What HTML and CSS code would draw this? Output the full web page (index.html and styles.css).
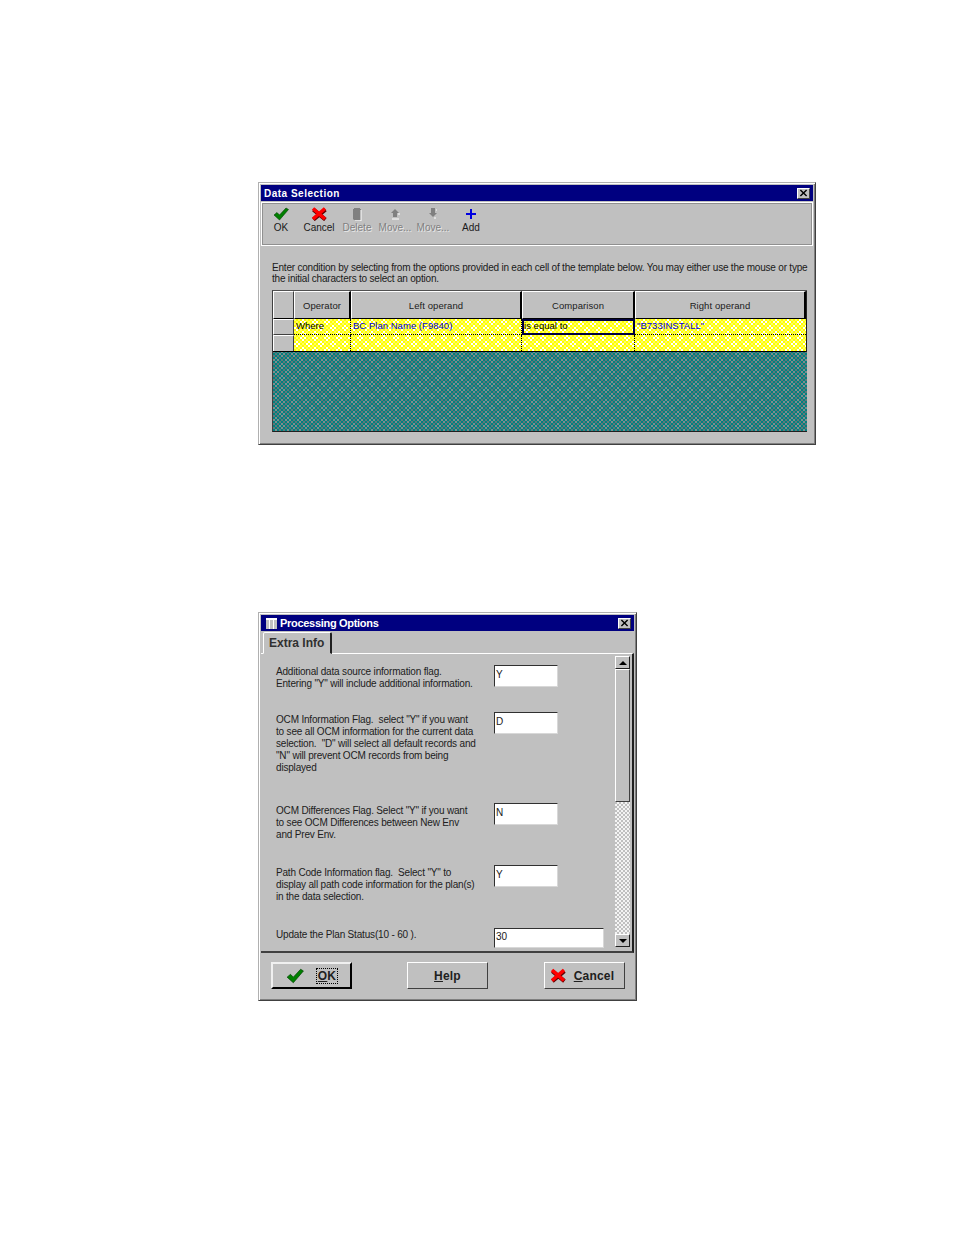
FILE: index.html
```html
<!DOCTYPE html>
<html lang="en">
<head>
<meta charset="utf-8">
<title>Data Selection and Processing Options</title>
<link rel="stylesheet" href="styles.css">
</head>
<body>
<svg class="defs" width="0" height="0" aria-hidden="true">
  <symbol id="check" viewBox="0 0 16 14"><path d="M1 8 L4 5.5 L6.5 8 L13 1 L15.5 2.5 L6.5 13 Z" fill="#008000" stroke="#004000" stroke-width=".6"/></symbol>
  <symbol id="cross" viewBox="0 0 16 14"><path d="M2 2 L14 12 M14 2 L2 12" stroke="#600000" stroke-width="4" fill="none" transform="translate(.4 .6)"/><path d="M2 1.5 L14 12 M14 1.5 L2 12" stroke="#f00" stroke-width="3.6" fill="none"/></symbol>
</svg>

<section class="win win-data">
  <header class="titlebar">
    <span class="title">Data Selection</span>
    <span class="close"><svg viewBox="0 0 9 9" width="9" height="8"><path d="M1 1 L8 8 M8 1 L1 8" stroke="#000" stroke-width="1.6"/></svg></span>
  </header>
  <div class="toolbar">
    <div class="tool"><svg class="tool-icon" width="16" height="14"><use href="#check"/></svg><span>OK</span></div>
    <div class="tool"><svg class="tool-icon" width="16" height="14"><use href="#cross"/></svg><span>Cancel</span></div>
    <div class="tool off"><svg class="tool-icon" width="16" height="14" viewBox="0 0 16 14"><path d="M4 2 H12 V13 H5 L4 12 Z" fill="#808080"/><path d="M5 1 H11 V2 H5 Z" fill="#808080"/><path d="M12 3 V14 H6" fill="none" stroke="#fff"/></svg><span>Delete</span></div>
    <div class="tool off"><svg class="tool-icon" width="16" height="14" viewBox="0 0 16 14"><path d="M8 2 L12 6 H10 V10 H6 V6 H4 Z" fill="#808080"/><path d="M5 12 H12 M11 7 H13" stroke="#fff"/></svg><span>Move...</span></div>
    <div class="tool off"><svg class="tool-icon" width="16" height="14" viewBox="0 0 16 14"><path d="M6 1 H10 V6 H12 L8 10 L4 6 H6 Z" fill="#808080"/><path d="M11 3 H12 M9 11 H11" stroke="#fff"/></svg><span>Move...</span></div>
    <div class="tool"><svg class="tool-icon" width="16" height="14" viewBox="0 0 16 14"><path d="M8 2 V12 M3 7 H13" stroke="#0000e0" stroke-width="2"/></svg><span>Add</span></div>
  </div>
  <p class="intro">Enter condition by selecting from the options provided in each cell of the template below. You may either use the mouse or type<br>the initial characters to select an option.</p>
  <div class="grid-wrap">
    <div class="grid">
      <div class="hd corner"></div>
      <div class="hd">Operator</div>
      <div class="hd">Left operand</div>
      <div class="hd">Comparison</div>
      <div class="hd">Right operand</div>

      <div class="rowhd"></div>
      <div class="cell black">Where</div>
      <div class="cell">BC Plan Name (F9840)</div>
      <div class="cell black focus">is equal to</div>
      <div class="cell">"B733INSTALL"</div>

      <div class="rowhd last"></div>
      <div class="cell last"></div>
      <div class="cell last"></div>
      <div class="cell last"></div>
      <div class="cell last"></div>
    </div>
    <div class="grid-empty"></div>
  </div>
</section>

<section class="win win-opts">
  <header class="titlebar">
    <span class="title-icon"></span>
    <span class="title big">Processing Options</span>
    <span class="close"><svg viewBox="0 0 9 9" width="9" height="8"><path d="M1 1 L8 8 M8 1 L1 8" stroke="#000" stroke-width="1.6"/></svg></span>
  </header>
  <div class="tabs"><div class="tab">Extra Info</div></div>
  <div class="panel">
    <div class="opts">
      <div class="opt opt-a"><p>Additional data source information flag.<br>Entering "Y" will include additional information.</p><div class="field">Y</div></div>
      <div class="opt opt-b"><p>OCM Information Flag.&nbsp; select "Y" if you want<br>to see all OCM information for the current data<br>selection.&nbsp; "D" will select all default records and<br>"N" will prevent OCM records from being<br>displayed</p><div class="field">D</div></div>
      <div class="opt opt-c"><p>OCM Differences Flag. Select "Y" if you want<br>to see OCM Differences between New Env<br>and Prev Env.</p><div class="field">N</div></div>
      <div class="opt opt-d"><p>Path Code Information flag.&nbsp; Select "Y" to<br>display all path code information for the plan(s)<br>in the data selection.</p><div class="field">Y</div></div>
      <div class="opt"><p>Update the Plan Status(10 - 60 ).</p><div class="field wide">30</div></div>
    </div>
    <div class="scrollbar">
      <div class="sb-btn"><span class="arrow up"></span></div>
      <div class="sb-thumb"></div>
      <div class="sb-track"></div>
      <div class="sb-btn"><span class="arrow down"></span></div>
    </div>
  </div>
  <footer class="actions">
    <div class="btn default"><svg width="18" height="16"><use href="#check"/></svg><span class="btn-label dotted"><u>O</u>K</span></div>
    <div class="btn"><span class="btn-label"><u>H</u>elp</span></div>
    <div class="btn btn-cancel"><svg width="16" height="15"><use href="#cross"/></svg><span class="btn-label"><u>C</u>ancel</span></div>
  </footer>
</section>
</body>
</html>
```
FILE: styles.css
```css
* { box-sizing: border-box; }
html, body { margin: 0; padding: 0; background: #fff; }
body {
  width: 954px;
  height: 1235px;
  padding: 182px 0 0 258px;
  font-family: "Liberation Sans", Arial, sans-serif;
  font-size: 10px;
  color: #1a1a1a;
  overflow: hidden;
}
.defs { position: absolute; }
p { margin: 0; }

.win {
  background: #c0c0c0;
  border: 1px solid;
  border-color: #b0b0b0 #404040 #404040 #b0b0b0;
  box-shadow: inset 1px 1px 0 #fff, inset -1px -1px 0 #808080;
  padding: 2px;
}
.win-data { width: 558px; height: 263px; }
.win-opts { width: 379px; height: 389px; margin-top: 167px; }

.titlebar {
  height: 16px;
  background: #000080;
  color: #fff;
  display: flex;
  align-items: center;
  padding: 0 3px;
}
.title { font-weight: bold; font-size: 10px; letter-spacing: .5px; flex: 1; }
.title.big { font-size: 11px; letter-spacing: -.3px; }
.title-icon {
  width: 11px;
  height: 11px;
  margin: 0 3px 0 2px;
  background: repeating-linear-gradient(90deg, #c0c0c0 0 3px, #fff 3px 4px);
  border-top: 2px solid #fff;
}
.close {
  width: 13px;
  height: 11px;
  background: #c0c0c0;
  border: 1px solid;
  border-color: #fff #404040 #404040 #fff;
  display: flex;
  align-items: center;
  justify-content: center;
}
.close svg { display: block; }

.toolbar {
  margin-top: 1px;
  height: 44px;
  border: 1px solid #fff;
  outline: 1px solid #909090;
  outline-offset: -2px;
  padding: 4px 0 0 0;
  display: flex;
}
.tool {
  width: 38px;
  display: flex;
  flex-direction: column;
  align-items: center;
  font-size: 10px;
  line-height: 12px;
}
.tool-icon { display: block; margin-bottom: 1px; }
.tool.off { color: #808080; text-shadow: 1px 1px 0 #e8e8e8; }

.intro {
  margin: 16px 0 0 11px;
  line-height: 11px;
  letter-spacing: -.205px;
  white-space: nowrap;
}

.grid-wrap {
  margin: 6px 0 0 11px;
  width: 535px;
  height: 142px;
  background:
    conic-gradient(#008080 25%, transparent 0 50%, #008080 0 75%, transparent 0) 0 0 / 4px 4px,
    conic-gradient(#808c8c 25%, #607878 0 50%, #808c8c 0 75%, #607878 0) 0 0 / 12px 12px;
  border-top: 1px solid #505050;
  border-left: 1px solid #404040;
  border-bottom: 1px solid #202020;
}
.grid {
  display: grid;
  grid-template-columns: 21px 57px 171px 113px 171px;
  grid-template-rows: 28px 16px 16px;
  width: 534px;
  border-right: 2px solid #202020;
  border-bottom: 1px solid #000;
}
.hd {
  background: #c0c0c0;
  border-top: 1px solid #fff;
  border-left: 1px solid #fff;
  border-right: 2px solid #000;
  border-bottom: 1px solid #000;
  display: flex;
  align-items: center;
  justify-content: center;
  letter-spacing: .08px;
  font-size: 9.5px;
  color: #202020;
}
.hd.corner { border-right: 1px solid #404040; }
.hd:last-of-type { border-right: 0; }
.rowhd {
  background: #c0c0c0;
  border: 1px solid;
  border-color: #fff #404040 #404040 #fff;
}
.cell {
  background:
    conic-gradient(#ff0 25%, transparent 0 50%, #ff0 0 75%, transparent 0) 0 0 / 4px 4px,
    conic-gradient(#fff 25%, #ffff60 0 50%, #fff 0 75%, #ffff60 0) 0 0 / 12px 12px;
  color: #0000d0;
  font-size: 9.5px;
  letter-spacing: .03px;
  padding: 0 0 0 2px;
  line-height: 13px;
  border-right: 1px dotted #000;
  border-bottom: 1px dotted #000;
  white-space: nowrap;
  overflow: hidden;
}
.cell:nth-child(5n) { border-right: 0; }
.cell.last, .rowhd.last { border-bottom: 0; }
.cell.black { color: #000; }
.cell.focus {
  border: 2px solid #000040;
  padding: 0;
  line-height: 10px;
}

.tabs { height: 22px; padding: 1px 0 0 2px; display: flex; }
.tab {
  width: 69px;
  height: 22px;
  border: 1px solid;
  border-color: #fff #202020 transparent #fff;
  border-radius: 2px 2px 0 0;
  border-right-width: 2px;
  font-size: 12px;
  font-weight: bold;
  color: #303030;
  padding: 3px 0 0 5px;
  background: #c0c0c0;
  position: relative;
  z-index: 1;
}
.panel {
  height: 300px;
  border-top: 1px solid #fff;
  border-right: 2px solid #202020;
  border-bottom: 2px solid #404040;
  display: flex;
  overflow: hidden;
}
.opts {
  flex: 1;
  padding: 11px 0 0 15px;
  display: flex;
  flex-direction: column;
}
.opt { display: flex; align-items: flex-start; font-size: 10px; line-height: 12px; color: #202020; letter-spacing: -.18px; }
.opt p { width: 218px; padding-top: 1px; white-space: nowrap; }
.opt-a { height: 47px; line-height: 11.5px; }
.opt-b { height: 91px; }
.opt-c { height: 62px; }
.opt-d { height: 63px; }
.opt-b p, .opt-c p, .opt-d p { padding-top: 2px; }
.field {
  width: 64px;
  height: 22px;
  background: #fff;
  border: 1px solid;
  border-color: #303030 #d8d8d8 #d8d8d8 #303030;
  padding: 3px 0 0 1px;
  flex: none;
  line-height: 12px;
}
.field.wide { width: 110px; height: 20px; padding-top: 2px; }
.scrollbar {
  width: 15px;
  margin: 2px 2px 4px 0;
  display: flex;
  flex-direction: column;
  flex: none;
}
.sb-btn {
  height: 13px;
  flex: none;
  background: #c0c0c0;
  border: 1px solid;
  border-color: #fff #202020 #202020 #fff;
  display: flex;
  align-items: center;
  justify-content: center;
}
.arrow { width: 0; height: 0; border-left: 4px solid transparent; border-right: 4px solid transparent; }
.arrow.up { border-bottom: 4px solid #000; }
.arrow.down { border-top: 4px solid #000; }
.sb-thumb {
  height: 133px;
  flex: none;
  background: #c0c0c0;
  border: 1px solid;
  border-color: #fff #404040 #404040 #fff;
}
.sb-track {
  flex: 1;
  background: conic-gradient(#f4f4f4 25%, #c0c0c0 0 50%, #f4f4f4 0 75%, #c0c0c0 0) 0 0 / 4px 4px;
}

.actions {
  padding: 9px 0 0 10px;
  display: flex;
  gap: 55px;
}
.btn {
  width: 81px;
  height: 27px;
  background: #c0c0c0;
  border: 1px solid;
  border-color: #fff #404040 #404040 #fff;
  display: flex;
  align-items: center;
  justify-content: center;
  gap: 8px;
  font-size: 12px;
  font-weight: bold;
  color: #202020;
  letter-spacing: .2px;
  line-height: 14px;
  padding-top: 1px;
}
.btn-cancel { margin-left: 1px; padding-right: 5px; padding-top: 0; }
.btn.default {
  border: 2px solid #000;
  border-top-color: #f0f0f0;
  border-left-color: #f0f0f0;
  gap: 13px;
  padding-top: 1px;
}
.btn-label.dotted { outline: 1px dotted #000; padding: 0 1px; }
```
